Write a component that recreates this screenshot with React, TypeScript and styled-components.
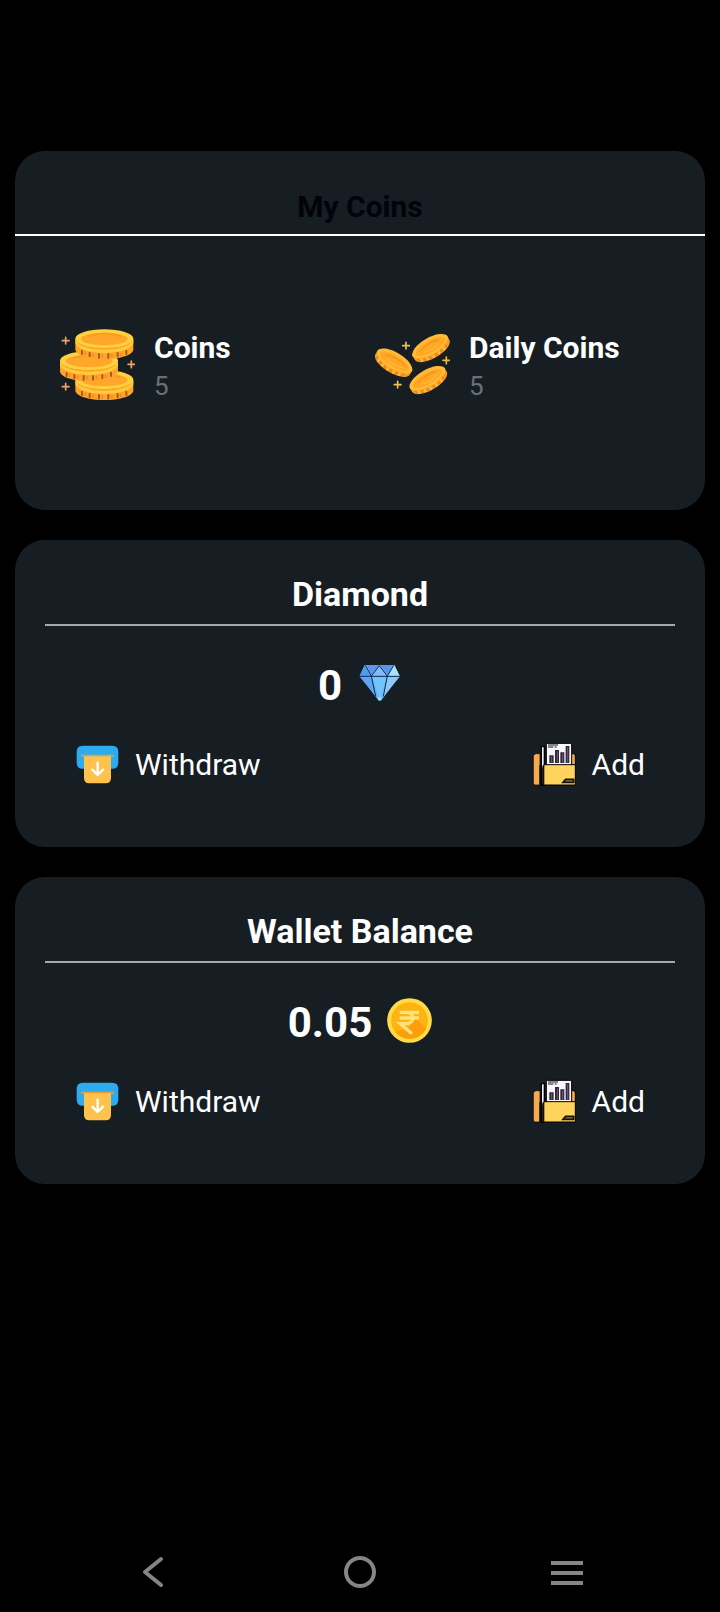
import React from "react";
import styled, { createGlobalStyle } from "styled-components";

const GlobalStyle = createGlobalStyle`
  *, *::before, *::after { box-sizing: border-box; }
  body {
    margin: 0;
    background: #000;
    color: #fff;
    font-family: Roboto, "Liberation Sans", sans-serif;
  }
  button { font: inherit; color: inherit; background: none; border: 0; padding: 0; cursor: pointer; }
`;

const Page = styled.div`
  display: flex;
  flex-direction: column;
  min-height: 100vh;
`;

const Cards = styled.main`
  display: flex;
  flex-direction: column;
  gap: 30px;
  padding: 151px 15px 30px;
`;

const Card = styled.section`
  background: #161d23;
  border-radius: 30px;
`;

const CoinsTitle = styled.h2`
  margin: 0;
  padding: 36px 0 7px;
  border-bottom: 2px solid #fff;
  color: #03030b;
  font-size: 30px;
  line-height: 40px;
  text-align: center;
`;

const CoinGrid = styled.div`
  display: grid;
  grid-template-columns: 1fr 1fr;
  padding: 91px 30px 105px;
`;

const CoinItem = styled.div`
  display: flex;
  gap: 19px;
  padding-left: 15px;
`;

const CoinText = styled.div`
  padding-top: 2px;
  line-height: 38px;
`;

const CoinName = styled.div`
  font-size: 30px;
  font-weight: 700;
`;

const CoinCount = styled.div`
  font-size: 26px;
  color: #6b7075;
`;

const BalanceCard = styled(Card)`
  padding: 34px 30px 60px;
`;

const BalanceTitle = styled.h2`
  margin: 0;
  padding-bottom: 10px;
  border-bottom: 2px solid #a5a9ae;
  font-size: 34px;
  line-height: 40px;
  text-align: center;
`;

const Amount = styled.div`
  display: flex;
  justify-content: center;
  align-items: flex-start;
  gap: 15px;
  padding-top: 35px;
  font-size: 42px;
  font-weight: 700;
  line-height: 50px;
`;

const Actions = styled.div`
  display: flex;
  justify-content: space-between;
  padding: 31px 30px 0;
`;

const Action = styled.button`
  display: flex;
  align-items: center;
  gap: 15px;
  font-size: 30px;
  line-height: 45px;
`;

const Icon = styled.svg<{ $size: number }>`
  display: block;
  flex: none;
  width: ${(p) => p.$size}px;
  height: ${(p) => p.$size}px;
`;

const NavBar = styled.nav`
  display: grid;
  grid-template-columns: repeat(3, 1fr);
  margin-top: auto;
  padding: 0 50px;
`;

const NavButton = styled.button`
  display: flex;
  align-items: center;
  justify-content: center;
  height: 80px;
`;

function Spark({ x, y, color }: { x: number; y: number; color: string }) {
  return (
    <path
      d={`M${x} ${y - 10}V${y + 10}M${x - 10} ${y}H${x + 10}`}
      stroke={color}
      strokeWidth="5"
      strokeLinecap="round"
    />
  );
}

function StackCoin({ x, y }: { x: number; y: number }) {
  return (
    <g transform={`translate(${x} ${y})`}>
      <path d="M-87 0V33C-84 50-45 61 0 61S84 50 87 33V0Z" fill="#ffa429" />
      <path d="M-87 3C-80 23-42 33 0 33S80 23 87 3V14C80 34 40 43 0 43S-80 34-87 14Z" fill="#ffcb3a" />
      <path
        d="M-67 36V46M-44 43V53M-16 46V57M12 46V57M40 43V53M66 36V46"
        stroke="#a65b20"
        strokeWidth="6"
        strokeLinecap="round"
      />
      <path
        d="M-58 38V48M-34 45V54M-6 47V57M22 46V56M50 42V52"
        stroke="#f5892a"
        strokeWidth="5"
      />
      <ellipse rx="87" ry="28" fill="#ffd13e" />
      <ellipse cy="1" rx="70" ry="19" fill="#ffa72b" />
      <path d="M-50-6C-20-18 22-18 50-6" fill="none" stroke="#f99a25" strokeWidth="5" />
    </g>
  );
}

function CoinStackIcon() {
  return (
    <Icon $size={75} viewBox="30 36 225 225" aria-hidden="true">
      <StackCoin x={163} y={194} />
      <StackCoin x={117} y={137} />
      <StackCoin x={163} y={71} />
      <Spark x={47} y={77} color="#eda36c" />
      <Spark x={244} y={148} color="#eda36c" />
      <Spark x={47} y={215} color="#eda36c" />
    </Icon>
  );
}

function TiltedCoin({ x, y, angle }: { x: number; y: number; angle: number }) {
  return (
    <g transform={`translate(${x} ${y}) rotate(${angle})`}>
      <path d="M-60-10V8C-56 23-30 31 0 31S56 23 60 8V-10Z" fill="#fb9c20" />
      <path d="M-50 8V19M-34 16V26M-16 20V30M4 21V31M23 19V28M42 12V22" stroke="#df851c" strokeWidth="4" />
      <path d="M-42 12V23M-25 19V28M-6 21V31M14 20V30M33 16V26" stroke="#ffcb50" strokeWidth="4" />
      <ellipse cy="-6" rx="60" ry="25" fill="#ffbb35" />
      <ellipse cy="-5" rx="49" ry="17" fill="#ffa823" />
      <path d="M-33-7C-20-15 15-17 32-10" fill="none" stroke="#f39325" strokeWidth="4" />
      <path d="M-24 1C-6 7 17 4 30-1" fill="none" stroke="#ffbd4a" strokeWidth="3" />
    </g>
  );
}

function ScatteredCoinsIcon() {
  return (
    <Icon $size={75} viewBox="30 36 225 225" aria-hidden="true">
      <TiltedCoin x={86} y={143} angle={31} />
      <TiltedCoin x={198} y={99} angle={-30} />
      <TiltedCoin x={190} y={195} angle={-30} />
      <Spark x={123} y={92} color="#ecc062" />
      <Spark x={244} y={136} color="#ecc032" />
      <Spark x={98} y={209} color="#ecc062" />
    </Icon>
  );
}

function DiamondIcon() {
  return (
    <Icon $size={45} viewBox="52 33 135 135" aria-hidden="true">
      <path d="M75 45H164L180 78L124 152H117L60 78Z" fill="#69b5fb" />
      <path d="M75 45L60 78H92Z" fill="#4f9bf4" />
      <path d="M82 45H119L94 74Z" fill="#5f93ee" />
      <path d="M119 45L98 78H140Z" fill="#86b9f8" />
      <path d="M121 45H158L144 74Z" fill="#5795ed" />
      <path d="M164 45L180 78H146Z" fill="#a3e4f9" />
      <path d="M60 80H95L112 142Z" fill="#60a4f5" />
      <path d="M98 80H141L120 148Z" fill="#70c5fb" />
      <path d="M144 80H180L128 143Z" fill="#8bc9fa" />
      <path
        d="M60 79H180M77 46L95 78L119 47L143 78L162 46M95 78L108 139M143 78L131 139"
        fill="none"
        stroke="#11294d"
        strokeWidth="3"
      />
      <circle cx="120" cy="146" r="5" fill="#a9e1fb" />
    </Icon>
  );
}

function RupeeIcon() {
  return (
    <Icon $size={45} viewBox="351 39 135 135" aria-hidden="true">
      <circle cx="418.500" cy="106.500" r="67" fill="#ffdc45" />
      <circle cx="418.500" cy="106.500" r="55" fill="#ffb313" />
      <path d="M375 140A55 55 0 0 0 468 131L438 100L415 130Z" fill="#ff9d0c" />
      <path
        d="M389 82H447M389 99H447M389 82H407C436 82 436 116 407 116H391L426 146"
        fill="none"
        stroke="#ffe37a"
        strokeWidth="10"
      />
    </Icon>
  );
}

function WithdrawIcon() {
  return (
    <Icon $size={45} viewBox="30 36 135 135" aria-hidden="true">
      <path d="M53 47H142Q160 47 160 65V98Q160 116 142 116H53Q35 116 35 98V65Q35 47 53 47Z" fill="#2cabef" />
      <path d="M50 77H145" stroke="#e9a03a" strokeWidth="5" strokeLinecap="round" />
      <path d="M57 79H138V144Q138 160 122 160H73Q57 160 57 144Z" fill="#ffc34d" />
      <path
        d="M98 98V134M82 119L98 135L114 119"
        fill="none"
        stroke="#fff"
        strokeWidth="7"
        strokeLinecap="round"
        strokeLinejoin="round"
      />
    </Icon>
  );
}

function FolderIcon() {
  return (
    <Icon $size={45} viewBox="33 36 135 135" aria-hidden="true">
      <path d="M37 80Q37 71 46 71H57V165H43Q37 165 37 158Z" fill="#f8aa4e" stroke="#000" strokeWidth="2" />
      <path d="M61 50H70V165H61Z" fill="#f1eff8" stroke="#000" strokeWidth="4" />
      <path d="M150 71H157Q163 71 163 78V110H150Z" fill="#f8aa4e" stroke="#000" strokeWidth="3" />
      <path d="M76 40H152V110H76Z" fill="#f9f6ff" stroke="#000" strokeWidth="3" />
      <path d="M81 45H111M81 51H97M101 51H107" stroke="#17121f" strokeWidth="3" />
      <path d="M85 76H98V99H85ZM102 60H114V99H102ZM118 67H130V99H118ZM134 48H145V99H134Z" fill="#30273b" />
      <path d="M92 79V98M109 64V98M125 71V98M140 51V98" stroke="#71606f" strokeWidth="3" />
      <path d="M72 104H163V165H65V112Q65 104 72 104Z" fill="#ffd45e" stroke="#000" strokeWidth="3" />
      <path d="M57 106V165M68 106V165" stroke="#120e12" strokeWidth="4" />
      <path d="M126 157L134 148H158V157Z" fill="#9b7833" stroke="#17120b" strokeWidth="5" />
    </Icon>
  );
}

function BackIcon() {
  return (
    <Icon $size={40} viewBox="0 0 40 40" aria-hidden="true">
      <path d="M28 7L12 20L28 33" fill="none" stroke="#858585" strokeWidth="4" strokeLinecap="round" strokeLinejoin="round" />
    </Icon>
  );
}

function HomeIcon() {
  return (
    <Icon $size={40} viewBox="0 0 40 40" aria-hidden="true">
      <circle cx="20" cy="20" r="14" fill="none" stroke="#858585" strokeWidth="4" />
    </Icon>
  );
}

function RecentsIcon() {
  return (
    <Icon $size={40} viewBox="0 0 40 40" aria-hidden="true">
      <path d="M4 11H36M4 21H36M4 31H36" stroke="#858585" strokeWidth="4" />
    </Icon>
  );
}

interface BalanceProps {
  title: string;
  amount: string;
  icon: React.ReactNode;
}

function Balance({ title, amount, icon }: BalanceProps) {
  return (
    <BalanceCard>
      <BalanceTitle>{title}</BalanceTitle>
      <Amount>
        <span>{amount}</span>
        {icon}
      </Amount>
      <Actions>
        <Action type="button">
          <WithdrawIcon />
          Withdraw
        </Action>
        <Action type="button">
          <FolderIcon />
          Add
        </Action>
      </Actions>
    </BalanceCard>
  );
}

export default function App() {
  return (
    <Page>
      <GlobalStyle />
      <Cards>
        <Card>
          <CoinsTitle>My Coins</CoinsTitle>
          <CoinGrid>
            <CoinItem>
              <CoinStackIcon />
              <CoinText>
                <CoinName>Coins</CoinName>
                <CoinCount>5</CoinCount>
              </CoinText>
            </CoinItem>
            <CoinItem>
              <ScatteredCoinsIcon />
              <CoinText>
                <CoinName>Daily Coins</CoinName>
                <CoinCount>5</CoinCount>
              </CoinText>
            </CoinItem>
          </CoinGrid>
        </Card>
        <Balance title="Diamond" amount="0" icon={<DiamondIcon />} />
        <Balance title="Wallet Balance" amount="0.05" icon={<RupeeIcon />} />
      </Cards>
      <NavBar aria-label="System">
        <NavButton type="button" aria-label="Back">
          <BackIcon />
        </NavButton>
        <NavButton type="button" aria-label="Home">
          <HomeIcon />
        </NavButton>
        <NavButton type="button" aria-label="Recent apps">
          <RecentsIcon />
        </NavButton>
      </NavBar>
    </Page>
  );
}
